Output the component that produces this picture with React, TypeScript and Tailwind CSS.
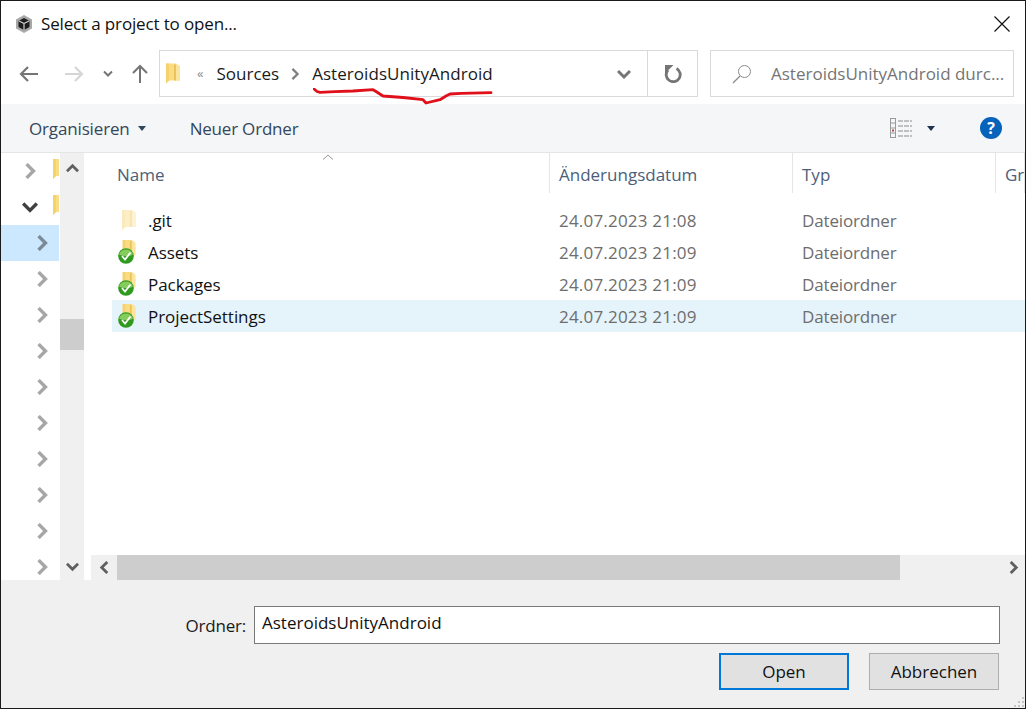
import React from "react";

const font = { fontFamily: '"Open Sans", "Noto Sans", sans-serif' };

function Chevron({ dir = "right", color = "#a6a6a6", size = 14, w = 3 }: { dir?: "right" | "left" | "up" | "down"; color?: string; size?: number; w?: number }) {
  const pts = { right: "4,1 10,7 4,13", left: "10,1 4,7 10,13", up: "1,10 7,4 13,10", down: "1,4 7,10 13,4" }[dir];
  return (
    <svg width={size} height={size} viewBox="0 0 14 14" className="shrink-0">
      <polyline points={pts} fill="none" stroke={color} strokeWidth={w} />
    </svg>
  );
}

function Folder({ w = 14, h = 20, faded = false }: { w?: number; h?: number; faded?: boolean }) {
  return (
    <svg width={w} height={h} viewBox="0 0 14 20" className="shrink-0" style={{ opacity: faded ? 0.45 : 1 }}>
      <path d="M0 0h10l4 3v14H3l-3 3z" fill="#f9dd85" />
      <path d="M10 0l4 3v14h-4z" fill="#fbe49c" />
      <path d="M8 1h2v16H8z" fill="#eec25a" />
      <path d="M0 0h3v17l-3 3z" fill="#f6d26c" />
    </svg>
  );
}

function SyncedFolder() {
  return (
    <div className="relative w-[24px] h-[24px] shrink-0">
      <div className="absolute left-[4px] top-0">
        <Folder w={14} h={18} />
      </div>
      <svg width="16" height="16" viewBox="0 0 16 16" className="absolute left-0 top-[8px]">
        <circle cx="8" cy="8" r="7.8" fill="#2f9a1e" />
        <path d="M1 6.5a7.4 7.4 0 0 1 14 0c-3 2-10 2-14 0z" fill="#9ad86a" opacity="0.8" />
        <polyline points="4,8 7,11.5 12.5,4.5" fill="none" stroke="#ffffff" strokeWidth="1.8" />
      </svg>
    </div>
  );
}

function FileRow({ name, date, selected, git }: { name: string; date: string; selected?: boolean; git?: boolean }) {
  return (
    <div className={`flex items-center h-[32px] ml-[21px] text-[17px] ${selected ? "bg-[#e5f3fb]" : ""}`}>
      <div className="w-[36px] pl-[6px] shrink-0 flex">
        {git ? (
          <div className="pl-[4px]"><Folder w={14} h={20} faded /></div>
        ) : (
          <SyncedFolder />
        )}
      </div>
      <span className="w-[411px] shrink-0 text-[#111] pt-[1px] -tracking-[0.05px]">{name}</span>
      <span className="w-[243px] shrink-0 text-[#6d6d6d] pt-[1px] tracking-[0.2px]">{date}</span>
      <span className="text-[#6d6d6d] pt-[1px] -tracking-[0.15px]">Dateiordner</span>
    </div>
  );
}

function TreeRow({ indent, open, active, folder }: { indent: number; open?: boolean; active?: boolean; folder?: boolean }) {
  return (
    <div className={`h-[36px] flex items-center shrink-0 relative ${active ? "bg-[#cce8ff]" : ""}`} style={{ paddingLeft: indent }}>
      <Chevron dir={open ? "down" : "right"} color={open ? "#404040" : active ? "#7a8a96" : "#a6a6a6"} size={16} w={3} />
      {folder && (
        <div className="absolute left-[52px] top-[6px] w-[7px] overflow-hidden">
          <Folder w={14} h={20} />
        </div>
      )}
    </div>
  );
}

function HeaderCell({ w, children }: { w: number; children: React.ReactNode }) {
  return (
    <div className="h-full flex items-center pl-[9px] pt-[3px] border-r border-[#e5e5e5] shrink-0 overflow-hidden whitespace-nowrap" style={{ width: w }}>
      {children}
    </div>
  );
}

export default function App() {
  return (
    <div style={font} className="w-[1026px] h-[709px] bg-white border border-[#1a1a1a] flex flex-col overflow-hidden relative">
      {/* Title bar */}
      <div className="h-[49px] flex items-center pl-[13px] pr-[15px] pb-[4px] shrink-0">
        <svg width="20" height="20" viewBox="0 0 20 20" className="shrink-0">
          <path d="M10 1l8 4.5v9L10 19l-8-4.5v-9z" fill="#a8a8a8" />
          <path d="M10 4l5.5 3v6L10 16l-5.5-3V7z" fill="#1c1c1c" />
          <path d="M10 9.5L5 7M10 9.5l5-2.5M10 9.5V16" stroke="#d0d0d0" strokeWidth="1.2" />
        </svg>
        <span className="ml-[7px] text-[17px] text-[#111] flex-1 -tracking-[0.15px]">Select a project to open...</span>
        <svg width="16" height="16" viewBox="0 0 16 16"><path d="M0.5 0.5l15 15M15.5 0.5l-15 15" stroke="#111" strokeWidth="1.2" /></svg>
      </div>

      {/* Address row */}
      <div className="h-[47px] flex items-center shrink-0 relative">
        <div className="w-[158px] flex items-center pl-[18px] shrink-0">
          <svg width="20" height="18" viewBox="0 0 20 18"><path d="M19 9H2M9 2L2 9l7 7" fill="none" stroke="#757575" strokeWidth="2.2" /></svg>
          <svg width="20" height="18" viewBox="0 0 20 18" className="ml-[25px]"><path d="M1 9h17M11 2l7 7-7 7" fill="none" stroke="#d6d6d6" strokeWidth="2.2" /></svg>
          <svg width="10" height="8" viewBox="0 0 10 8" className="ml-[19px]"><path d="M1 1.5l4 4 4-4" fill="none" stroke="#757575" strokeWidth="2" /></svg>
          <svg width="16" height="20" viewBox="0 0 16 20" className="ml-[19px]"><path d="M8 19V2M1 9l7-7 7 7" fill="none" stroke="#757575" strokeWidth="2" /></svg>
        </div>
        <div className="w-[539px] h-full border border-[#d9d9d9] flex items-center shrink-0">
          <div className="w-[440px] flex items-center pl-[6px] relative shrink-0">
            <Folder w={14} h={21} />
            <span className="ml-[17px] text-[#8c8c8c] text-[13px] leading-none">«</span>
            <span className="ml-[13px] text-[17px] text-[#1a1a1a]">Sources</span>
            <div className="ml-[10px] mr-[11px]"><Chevron color="#7f7f7f" size={12} w={2.6} /></div>
            <span className="text-[17px] text-[#1a1a1a] tracking-[0.05px]">AsteroidsUnityAndroid</span>
            <svg width="182" height="17" viewBox="0 0 182 17" className="absolute left-[153px] top-[27px]">
              <path d="M1 1L4 3.5 7 4.3 22 3.6 40 3 60 1.7 63 3.5 70 8 90 9.5 110 11.7 113 15 127 11.7 133 8 137 6 148 5.3 178 4.7" fill="none" stroke="#e0101a" strokeWidth="2.8" strokeLinejoin="round" strokeLinecap="round" />
            </svg>
          </div>
          <div className="flex-1 flex justify-end pr-[16px]">
            <Chevron dir="down" color="#757575" size={14} w={3} />
          </div>
          <div className="w-[50px] h-full border-l border-[#d9d9d9] flex items-center justify-center shrink-0">
            <svg width="18" height="18" viewBox="0 0 18 18"><path d="M12.5 3.5A7 7 0 1 1 4 5" fill="none" stroke="#757575" strokeWidth="2.8" /><path d="M1 0h8.5L1 8.5z" fill="#757575" /></svg>
          </div>
        </div>
        <div className="ml-[12px] w-[304px] h-full border border-[#d9d9d9] flex items-center shrink-0 pl-[21px]">
          <svg width="20" height="20" viewBox="0 0 20 20"><circle cx="12.5" cy="7.5" r="6" fill="none" stroke="#8a8a8a" strokeWidth="1" /><path d="M8 12l-7 7" stroke="#8a8a8a" strokeWidth="1.2" /></svg>
          <span className="ml-[19px] text-[17px] text-[#757575] whitespace-nowrap">AsteroidsUnityAndroid durc...</span>
        </div>
      </div>

      {/* Toolbar */}
      <div className="mt-[7px] h-[49px] bg-[#f5f6f7] border-b border-[#e5e5e5] flex items-center shrink-0 pl-[28px] pr-[23px] text-[17px] text-[#33475b]">
        <span className="pt-[1px] -tracking-[0.15px]">Organisieren</span>
        <svg width="8" height="5" viewBox="0 0 8 5" className="ml-[8px]"><path d="M0 0h8L4 5z" fill="#33475b" /></svg>
        <span className="ml-[44px] pt-[1px] -tracking-[0.2px]">Neuer Ordner</span>
        <div className="flex-1" />
        <svg width="22" height="20" viewBox="0 0 22 20">
          <g fill="none" stroke="#9a9a9a"><rect x="0.5" y="0.5" width="5" height="19" /><path d="M0.5 5h5M0.5 10h5M0.5 15h5" /></g>
          <path d="M8 3h14M8 8h14M8 13h14M8 18h14" stroke="#8a8a8a" strokeDasharray="5 1" />
          <rect x="2" y="11.5" width="2" height="2" fill="#b04a4a" />
        </svg>
        <svg width="8" height="5" viewBox="0 0 8 5" className="ml-[15px]"><path d="M0 0h8L4 5z" fill="#1f3350" /></svg>
        <div className="ml-[45px] w-[22px] h-[22px] rounded-full bg-[#0563bb] text-white text-[16px] font-bold flex items-center justify-center leading-none">?</div>
      </div>

      {/* Body */}
      <div className="flex-1 flex min-h-0">
        <div className="w-[58px] shrink-0 overflow-hidden flex flex-col">
          <TreeRow indent={21} folder />
          <TreeRow indent={21} open folder />
          <TreeRow indent={33} active />
          {Array.from({ length: 9 }).map((_, i) => <TreeRow key={i} indent={33} />)}
        </div>
        <div className="w-[1px] shrink-0" />
        <div className="w-[24px] shrink-0 bg-[#f0f0f0] flex flex-col">
          <div className="h-[31px] flex items-center justify-center shrink-0"><Chevron dir="up" color="#606060" size={13} /></div>
          <div className="mt-[135px] h-[31px] bg-[#cdcdcd]" />
          <div className="flex-1" />
          <div className="h-[27px] flex items-center justify-center shrink-0"><Chevron dir="down" color="#606060" size={13} /></div>
        </div>
        <div className="w-[7px] shrink-0" />
        <div className="flex-1 min-w-0 flex flex-col">
          <div className="flex-1 min-h-0 relative">
            <div className="h-[40px] flex text-[17px] text-[#4c607a]">
              <HeaderCell w={459}><span className="pl-[17px]">Name</span></HeaderCell>
              <HeaderCell w={243}>Änderungsdatum</HeaderCell>
              <HeaderCell w={203}>Typ</HeaderCell>
              <HeaderCell w={29}>Größe</HeaderCell>
            </div>
            <svg width="12" height="6" viewBox="0 0 12 6" className="absolute left-[231px] top-[1px]"><path d="M1 5.5L6 1l5 4.5" fill="none" stroke="#9a9a9a" /></svg>
            <div className="pt-[11px]">
              <FileRow name=".git" date="24.07.2023 21:08" git />
              <FileRow name="Assets" date="24.07.2023 21:09" />
              <FileRow name="Packages" date="24.07.2023 21:09" />
              <FileRow name="ProjectSettings" date="24.07.2023 21:09" selected />
            </div>
          </div>
          <div className="h-[25px] bg-[#f0f0f0] flex items-center shrink-0">
            <div className="w-[26px] flex justify-center shrink-0"><Chevron dir="left" color="#606060" size={13} /></div>
            <div className="w-[783px] h-full bg-[#cdcdcd] shrink-0" />
            <div className="flex-1 flex justify-end pr-[5px]"><Chevron dir="right" color="#606060" size={13} /></div>
          </div>
        </div>
      </div>

      {/* Footer */}
      <div className="h-[128px] bg-[#f0f0f0] shrink-0 pt-[26px] relative">
        <div className="flex items-center justify-end pr-[25px]">
          <span className="text-[17px] text-[#1a1a1a] mr-[8px] pt-[1px] -tracking-[0.2px]">Ordner:</span>
          <div className="w-[746px] h-[38px] bg-white border border-[#7a7a7a] flex items-center pl-[7px] pb-[4px] text-[17px] text-[#111]">AsteroidsUnityAndroid</div>
        </div>
        <div className="flex justify-end pr-[26px] mt-[9px] gap-[20px]">
          <div className="w-[130px] h-[37px] bg-[#e1e1e1] border-2 border-[#0078d7] flex items-center justify-center text-[17px] text-[#111]">Open</div>
          <div className="w-[130px] h-[37px] bg-[#e1e1e1] border border-[#adadad] flex items-center justify-center text-[17px] text-[#111]">Abbrechen</div>
        </div>
        <svg width="12" height="12" viewBox="0 0 12 12" className="absolute right-0 bottom-0">
          <path d="M9 1h2v2H9zM5 5h2v2H5zM9 5h2v2H9zM1 9h2v2H1zM5 9h2v2H5zM9 9h2v2H9z" fill="#c4c4c4" />
        </svg>
      </div>
    </div>
  );
}
